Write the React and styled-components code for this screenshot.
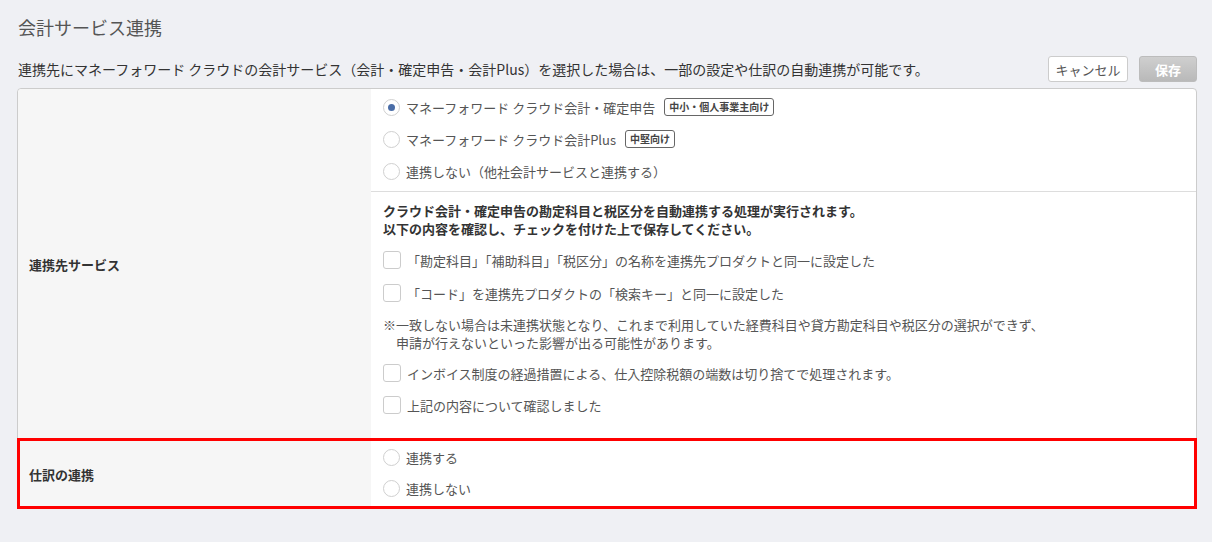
import styled, { createGlobalStyle } from "styled-components";

const GlobalStyle = createGlobalStyle`
  body {
    margin: 0;
    background: #eff0f4;
    font-family: "Noto Sans CJK JP", "Noto Sans", sans-serif;
    color: #555;
  }
`;

const Page = styled.div`
  padding: 14px 15px 30px 17px;
`;

const Title = styled.h1`
  margin: 0 0 16px 1px;
  font-size: 18px;
  line-height: 26px;
  font-weight: 400;
  color: #555;
`;

const Toolbar = styled.div`
  display: flex;
  align-items: center;
  height: 26px;
  margin-bottom: 6px;
`;

const Desc = styled.p`
  flex: 1;
  margin: 0 0 0 1px;
  font-size: 14px;
  color: #333;
  white-space: nowrap;
`;

const Button = styled.button`
  height: 26px;
  padding: 0;
  margin-left: ${(p) => (p.primary ? "11px" : "0")};
  border-radius: 3px;
  font-family: inherit;
  font-size: 13px;
  white-space: nowrap;
  border: 1px solid ${(p) => (p.primary ? "#bcbcbc" : "#ccc")};
  background: ${(p) =>
    p.primary ? "linear-gradient(#cfcfcf, #b9b9b9)" : "#fff"};
  color: ${(p) => (p.primary ? "#fff" : "#555")};
  font-weight: ${(p) => (p.primary ? 700 : 400)};
  width: ${(p) => (p.primary ? "58px" : "80px")};
`;

const Table = styled.div`
  border: 1px solid #ccc;
  border-radius: 4px;
  background: #fff;
`;

const Row = styled.div`
  display: grid;
  grid-template-columns: 353px 1fr;
  border-top: ${(p) => (p.first ? "none" : "1px solid #ddd")};
  outline: ${(p) => (p.highlight ? "3px solid #f00" : "none")};
  outline-offset: -2px;
  position: relative;
`;

const Label = styled.div`
  display: flex;
  align-items: center;
  padding: 0 11px;
  background: #f6f6f6;
  font-size: 13px;
  font-weight: 700;
  color: #333;
  border-radius: ${(p) => (p.first ? "4px 0 0 0" : "0 0 0 4px")};
`;

const Cell = styled.div`
  display: flex;
  flex-direction: column;
`;

const RadioGroup = styled.div`
  padding: ${(p) => p.pad || "2px 12px 4px"};
  border-bottom: ${(p) => (p.divider ? "1px solid #ddd" : "none")};
`;

const Choice = styled.label`
  display: flex;
  align-items: center;
  height: ${(p) => p.h || "32px"};
  font-size: 13px;
  color: #555;
`;

const Radio = styled.span`
  width: 17px;
  height: 17px;
  box-sizing: border-box;
  border: 1px solid #d0d0d0;
  border-radius: 50%;
  margin-right: 6px;
  display: flex;
  align-items: center;
  justify-content: center;
  background: #fff;
  &::after {
    content: "";
    width: 7px;
    height: 7px;
    border-radius: 50%;
    background: ${(p) => (p.checked ? "#4a6da7" : "transparent")};
  }
`;

const Badge = styled.span`
  margin-left: 9px;
  padding: 0 4px;
  height: 18px;
  line-height: 16px;
  box-sizing: border-box;
  border: 1px solid #666;
  border-radius: 3px;
  font-size: 10px;
  font-weight: 700;
  color: #444;
`;

const Checks = styled.div`
  padding: 10px 12px 18px;
`;

const Lead = styled.p`
  margin: 0 0 6px;
  font-size: 13px;
  line-height: 18px;
  font-weight: 700;
  color: #333;
`;

const CheckRow = styled.label`
  display: flex;
  align-items: center;
  height: 32px;
  margin-top: ${(p) => p.gap || "0"};
  font-size: 13px;
  color: #555;
`;

const Box = styled.span`
  width: 18px;
  height: 18px;
  box-sizing: border-box;
  border: 1px solid #ccc;
  border-radius: 3px;
  background: #fff;
  margin-right: 6px;
`;

const Note = styled.p`
  margin: 7px 0 5px;
  padding-left: 13px;
  text-indent: -13px;
  font-size: 13px;
  line-height: 18px;
  color: #555;
`;

export default function App() {
  return (
    <>
      <GlobalStyle />
      <Page>
        <Title>会計サービス連携</Title>
        <Toolbar>
          <Desc>
            連携先にマネーフォワード クラウドの会計サービス（会計・確定申告・会計Plus）を選択した場合は、一部の設定や仕訳の自動連携が可能です。
          </Desc>
          <Button>キャンセル</Button>
          <Button primary>保存</Button>
        </Toolbar>
        <Table>
          <Row first>
            <Label first>連携先サービス</Label>
            <Cell>
              <RadioGroup divider>
                <Choice>
                  <Radio checked />
                  マネーフォワード クラウド会計・確定申告
                  <Badge>中小・個人事業主向け</Badge>
                </Choice>
                <Choice>
                  <Radio />
                  マネーフォワード クラウド会計Plus
                  <Badge>中堅向け</Badge>
                </Choice>
                <Choice>
                  <Radio />
                  連携しない（他社会計サービスと連携する）
                </Choice>
              </RadioGroup>
              <Checks>
                <Lead>
                  クラウド会計・確定申告の勘定科目と税区分を自動連携する処理が実行されます。
                  <br />
                  以下の内容を確認し、チェックを付けた上で保存してください。
                </Lead>
                <CheckRow>
                  <Box />
                  「勘定科目」「補助科目」「税区分」の名称を連携先プロダクトと同一に設定した
                </CheckRow>
                <CheckRow gap="1px">
                  <Box />
                  「コード」を連携先プロダクトの「検索キー」と同一に設定した
                </CheckRow>
                <Note>
                  ※一致しない場合は未連携状態となり、これまで利用していた経費科目や貸方勘定科目や税区分の選択ができず、
                  <br />
                  申請が行えないといった影響が出る可能性があります。
                </Note>
                <CheckRow>
                  <Box />
                  インボイス制度の経過措置による、仕入控除税額の端数は切り捨てで処理されます。
                </CheckRow>
                <CheckRow>
                  <Box />
                  上記の内容について確認しました
                </CheckRow>
              </Checks>
            </Cell>
          </Row>
          <Row highlight>
            <Label>仕訳の連携</Label>
            <Cell>
              <RadioGroup pad="2px 12px 4px">
                <Choice h="31px">
                  <Radio />
                  連携する
                </Choice>
                <Choice h="31px">
                  <Radio />
                  連携しない
                </Choice>
              </RadioGroup>
            </Cell>
          </Row>
        </Table>
      </Page>
    </>
  );
}
